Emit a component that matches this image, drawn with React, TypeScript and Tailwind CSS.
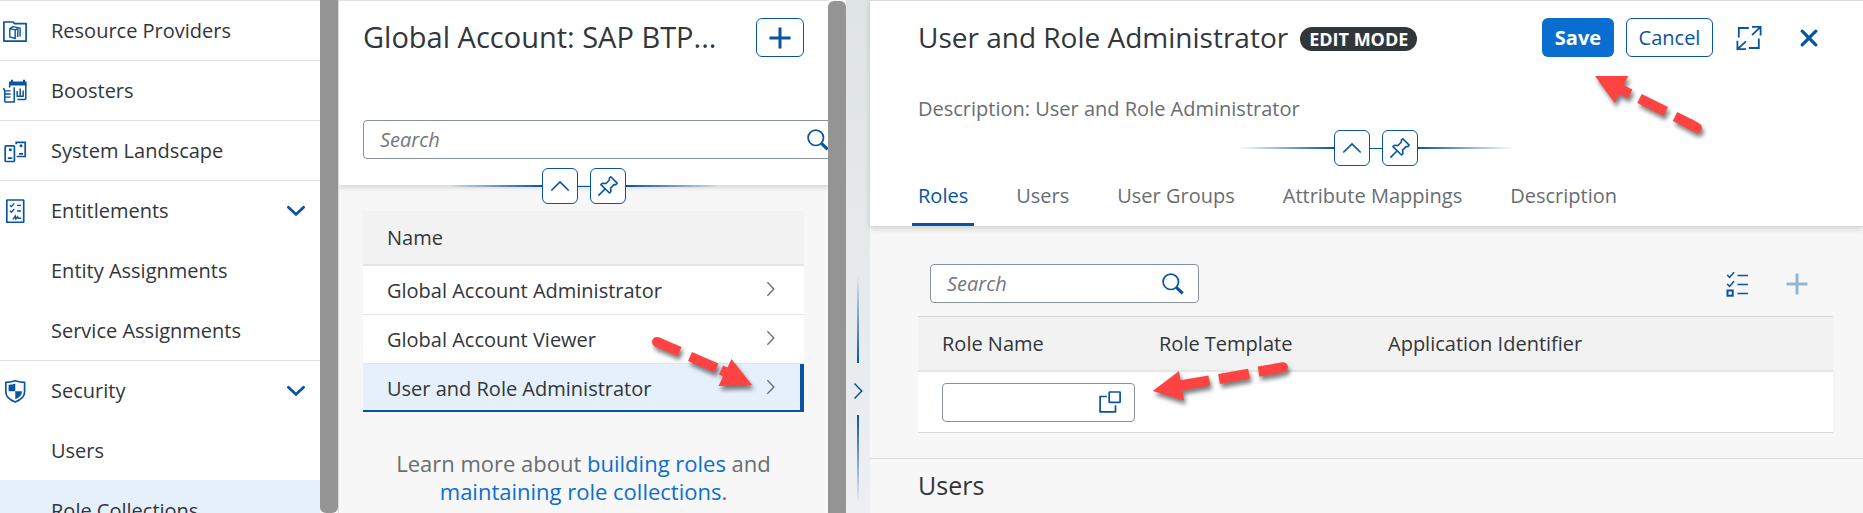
import type { ReactNode } from 'react';

type IconProps = { className?: string };

function FolderIcon() {
  return (
    <svg viewBox="0 0 24 24" className="size-6" fill="none" stroke="currentColor" strokeWidth="1.7" aria-hidden="true">
      <path d="M.9 22.1V3h9.3l1.2 1.6h11.7v17.5z" strokeLinejoin="round" />
      <path d="M6.8 9.6l5.4 1.3v8.6l-5.4-1.6zM6.8 9.6l3.4-2 6.9 1.5v8.4M12.2 10.9l2.6-1.2v8.2" strokeWidth="1.4" strokeLinejoin="round" />
    </svg>
  );
}

function BoosterIcon() {
  return (
    <svg viewBox="0 0 24 24" className="size-6" fill="none" stroke="currentColor" strokeWidth="1.5" aria-hidden="true">
      <path d="M6 6.4V2.6h2V.8h2v1.8h10V.8h2v1.8h1.6v3.8z" fill="currentColor" stroke="none" />
      <path d="M6.6 6v2.6M22.8 5v14.6q0 .9-.9.9H14.4" />
      <path d="M14.2 12v5.2h6.6M17.2 9.5v7.4M20.2 11.5v5.6" />
      <path d="M1.8 23.1V12.2L.6 8.9M1.8 23.1h9.4V8.2" />
      <path d="M2 11.8h5.6M2 15h5.6M2 18.2h5.6" strokeWidth="1.3" />
    </svg>
  );
}

function LandscapeIcon() {
  return (
    <svg viewBox="0 0 24 24" className="size-6" fill="none" stroke="currentColor" strokeWidth="1.7" aria-hidden="true">
      <rect x="2.2" y="6.9" width="9.2" height="15.6" rx="0.8" />
      <path d="M13.2 5.2V3.3h9v14.2h-8.6M4.8 19.2h4.4M16 14.8h4" />
      <circle cx="7.3" cy="10.8" r="1.5" fill="currentColor" stroke="none" />
      <circle cx="18" cy="6.8" r="1.5" fill="currentColor" stroke="none" />
    </svg>
  );
}

function EntitlementIcon() {
  return (
    <svg viewBox="0 0 24 24" className="size-6" fill="none" stroke="currentColor" strokeWidth="1.4" aria-hidden="true">
      <rect x="3.8" y="1" width="16.9" height="22.4" rx="0.6" strokeWidth="1.7" />
      <path d="M7 6.2l1.4 1.4 2.8-3.2M7 11.8l1.4 1.4 2.8-3.2M14 6.4h4M14 12h4" />
      <path d="M10 20.3l2.2-3.2.6 2.9 1.8-2.3.6 1.6h2.8" />
    </svg>
  );
}

function ShieldIcon() {
  return (
    <svg viewBox="0 0 24 24" className="size-6" fill="none" stroke="currentColor" strokeWidth="1.7" aria-hidden="true">
      <path d="M12.2 1.7q4.8 1.6 9.4 1.6v9.5q0 6.7-9.4 10.2-9.4-3.5-9.4-10.2V3.3q4.6 0 9.4-1.6z" strokeLinejoin="round" />
      <path d="M5.6 5.7q3.5-.2 6.7-1.3v7.9H5.6zM12.3 12.3H19q0 5-6.700 8z" fill="currentColor" stroke="none" />
    </svg>
  );
}

function ChevronDown() {
  return (
    <svg viewBox="0 0 20 12" className="h-3 w-5" fill="none" stroke="currentColor" strokeWidth="2.8" strokeLinecap="round" aria-hidden="true">
      <path d="M2.4 2.2L10 9.4l7.6-7.2" />
    </svg>
  );
}

function ChevronRight({ className = '' }: IconProps) {
  return (
    <svg viewBox="0 0 10 18" className={className} fill="none" stroke="currentColor" strokeWidth="1.5" aria-hidden="true">
      <path d="M1.5 1.5L8.8 9l-7.3 7.5" />
    </svg>
  );
}

function SearchIcon() {
  return (
    <svg viewBox="0 0 22 22" className="size-[22px]" fill="none" stroke="currentColor" aria-hidden="true">
      <circle cx="8.8" cy="8.8" r="7.7" strokeWidth="1.7" />
      <path d="M14.3 14.3l6.4 6" strokeWidth="3.2" />
    </svg>
  );
}

function PlusIcon() {
  return (
    <svg viewBox="0 0 22 22" className="size-[22px]" fill="none" stroke="currentColor" strokeWidth="3" aria-hidden="true">
      <path d="M11 .5v21M.5 11h21" />
    </svg>
  );
}

function CollapseUpIcon() {
  return (
    <svg viewBox="0 0 20 12" className="h-3 w-5" fill="none" stroke="currentColor" strokeWidth="1.7" aria-hidden="true">
      <path d="M1.3 10.5L10 2l8.7 8.5" />
    </svg>
  );
}

function PinIcon() {
  return (
    <svg viewBox="0 0 22 22" className="size-[22px]" fill="none" stroke="currentColor" strokeWidth="1.6" strokeLinejoin="round" aria-hidden="true">
      <path d="M13.8 1.8l6.4 6.3-1.2 1.5h-2l-3.4 3.5.3 3.6-1.4 1.3-8.6-8.4 1.4-1.3 3.7.2 3.4-3.5V3z" />
      <path d="M8 14L1.4 20.6" />
    </svg>
  );
}

function ExpandIcon() {
  return (
    <svg viewBox="0 0 26 26" className="size-[26px]" fill="none" stroke="currentColor" strokeWidth="1.8" aria-hidden="true">
      <path d="M2.8 12.5V3h10M22.8 13.5V23h-10" />
      <path d="M16 1.8h8.6v8.7M24.3 2.1l-8.3 8M10 24.2H1.4v-8.4M1.7 23.9l8.3-7.6" />
    </svg>
  );
}

function CloseIcon() {
  return (
    <svg viewBox="0 0 18 18" className="size-[18px]" fill="none" stroke="currentColor" strokeWidth="3.2" strokeLinecap="round" aria-hidden="true">
      <path d="M2.2 2.2l13.6 13.6M15.8 2.2L2.2 15.8" />
    </svg>
  );
}

function ValueHelpIcon() {
  return (
    <svg viewBox="0 0 22 22" className="size-[22px]" fill="none" stroke="currentColor" strokeWidth="1.7" aria-hidden="true">
      <path d="M7.8 5.5H1.1v15.4h15.4v-6.6" strokeLinejoin="round" />
      <rect x="10.2" y="1" width="10.9" height="10.4" rx="0.5" />
    </svg>
  );
}

function MultiSelectIcon() {
  return (
    <svg viewBox="0 0 22 26" className="h-[26px] w-[22px]" fill="none" stroke="currentColor" strokeWidth="1.6" aria-hidden="true">
      <path d="M1.2 4l2.4 2.4L8 1.2M1.2 13l2.4 2.4L8 10.2M11.5 4.5H22M11.5 13.5H22M11.5 22.5H22" />
      <rect x="1.5" y="19.5" width="5.2" height="5.2" strokeWidth="2" />
    </svg>
  );
}

function NavItem({ icon, label, child, expandable, selected }: { icon?: ReactNode; label: string; child?: boolean; expandable?: boolean; selected?: boolean }) {
  return (
    <li className={child ? '' : 'border-t border-[#e0e0e0]'}>
      <a
        href="#"
        aria-current={selected ? 'page' : undefined}
        className={`flex items-center pr-3.5 pl-[3px] ${child ? 'h-[60px] pt-0.5' : 'h-[59px]'} ${selected ? 'bg-[#e5f0fa]' : ''}`}
      >
        <span className="w-12 shrink-0 text-[#0854a0]">{icon}</span>
        <span className="flex-1">{label}</span>
        {expandable && <span className="text-[#0854a0]"><ChevronDown /></span>}
      </a>
    </li>
  );
}

function HeaderToggles() {
  const box = 'flex size-9 items-center justify-center rounded-md border border-[#0854a0] bg-white text-[#0854a0]';
  return (
    <div className="flex items-center justify-center">
      <span className="h-0.5 w-24 bg-linear-to-r from-transparent to-[#0854a0]" />
      <button type="button" aria-label="Collapse header" className={box}><CollapseUpIcon /></button>
      <span className="h-px w-3 bg-[#0854a0]" />
      <button type="button" aria-label="Pin header" className={box}><PinIcon /></button>
      <span className="h-0.5 w-24 bg-linear-to-r from-[#0854a0] to-transparent" />
    </div>
  );
}

function SearchBox({ label, className }: { label: string; className: string }) {
  return (
    <div className={`flex h-[39px] shrink-0 items-center rounded-sm border border-[#89919a] bg-white pr-3.5 pl-4 ${className}`}>
      <input
        type="search"
        aria-label={label}
        placeholder="Search"
        className="min-w-0 flex-1 bg-transparent outline-none placeholder:text-[#74777a] placeholder:italic"
      />
      <button type="button" aria-label="Run search" className="text-[#0854a0]"><SearchIcon /></button>
    </div>
  );
}

function Arrow({ className, viewBox, head, dashes, cap }: { className: string; viewBox: string; head: string; dashes: string; cap: string }) {
  return (
    <svg viewBox={viewBox} className={`pointer-events-none absolute drop-shadow-[2px_4px_2px_rgba(0,0,0,0.5)] ${className}`} fill="none" stroke="#ff4343" strokeWidth="10" aria-hidden="true">
      <path d={head} fill="#ff4343" stroke="none" />
      <path d={dashes} />
      <path d={cap} strokeLinecap="round" />
    </svg>
  );
}

const collections = ['Global Account Administrator', 'Global Account Viewer', 'User and Role Administrator'];
const tabs = ['Roles', 'Users', 'User Groups', 'Attribute Mappings', 'Description'];

export default function App() {
  return (
    <div className="flex h-screen overflow-hidden bg-[#f7f7f7] font-['Open_Sans',sans-serif] text-xl text-[#32363a]">
      <nav aria-label="Main" className="w-80 shrink-0 overflow-hidden bg-white">
        <ul>
          <NavItem icon={<FolderIcon />} label="Resource Providers" />
          <NavItem icon={<BoosterIcon />} label="Boosters" />
          <NavItem icon={<LandscapeIcon />} label="System Landscape" />
          <NavItem icon={<EntitlementIcon />} label="Entitlements" expandable />
          <NavItem label="Entity Assignments" child />
          <NavItem label="Service Assignments" child />
          <NavItem icon={<ShieldIcon />} label="Security" expandable />
          <NavItem label="Users" child />
          <NavItem label="Role Collections" child selected />
        </ul>
      </nav>
      <div className="w-[18px] shrink-0 rounded-b-md bg-[#949494]" />

      <section className="flex w-[490px] shrink-0 flex-col overflow-hidden border-l border-[#d9d9d9]">
        <header className="h-[186px] shrink-0 border-t border-b border-[#e0e0e0] bg-white pl-6 shadow-[0_2px_4px_rgba(0,0,0,0.12)]">
          <div className="flex items-start justify-between pt-[17px] pr-6">
            <h1 className="text-[29px] leading-[38px]">Global Account: SAP BTP...</h1>
            <button type="button" aria-label="Create role collection" className="flex h-[39px] w-12 items-center justify-center rounded-md border border-[#0854a0] text-[#0854a0]">
              <PlusIcon />
            </button>
          </div>
          <SearchBox label="Search role collections" className="mt-[63px] w-[481px]" />
        </header>
        <div className="-mt-[18px]">
          <HeaderToggles />
        </div>

        <div className="px-6 pt-[7px]">
          <table className="w-full border-separate border-spacing-0 text-left">
            <thead>
              <tr className="h-[55px] bg-[#f2f2f2]">
                <th className="border-b-2 border-[#e5e5e5] pl-6 font-normal" colSpan={2}>Name</th>
              </tr>
            </thead>
            <tbody>
              {collections.map((name, i) => {
                const selected = i === 2;
                return (
                  <tr key={name} className={selected ? 'h-12 bg-[#e5f0fa]' : 'h-[49px] bg-white'}>
                    <td className={selected ? 'border-b-2 border-[#0854a0] pt-[3px] pl-6' : 'border-b border-[#e5e5e5] pt-0.5 pl-6'}>{name}</td>
                    <td
                      className={
                        selected
                          ? 'w-[38px] border-r-4 border-b-2 border-r-[#0854a0] border-b-[#0854a0] text-[#6a6d70]'
                          : 'w-[38px] border-b border-[#e5e5e5] pb-0.5 text-[#6a6d70]'
                      }
                    >
                      <ChevronRight className="h-4 w-[9px]" />
                    </td>
                  </tr>
                );
              })}
            </tbody>
          </table>
          <p className="mt-[37px] text-center text-[22px] leading-7 text-[#6a6d70]">
            Learn more about <a href="#" className="text-[#0a6ed1]">building roles</a> and<br />
            <a href="#" className="text-[#0a6ed1]">maintaining role collections</a>.
          </p>
        </div>
      </section>
      <div className="mt-px w-[18px] shrink-0 rounded-t-md bg-[#949494]" />

      <div className="flex w-6 shrink-0 flex-col items-center bg-linear-to-b from-[#dfe4e4] to-[#edeff2] pt-[275px]">
        <span className="h-[88px] w-0.5 shrink-0 bg-linear-to-b from-transparent to-[#0854a0]" />
        <button type="button" aria-label="Resize columns" className="flex h-[52px] shrink-0 items-center pt-1 text-[#0854a0]">
          <ChevronRight className="h-[18px] w-2.5" />
        </button>
        <span className="h-[88px] w-0.5 shrink-0 bg-linear-to-b from-[#0854a0] to-transparent" />
      </div>

      <main className="min-w-0 flex-1">
        <header className="h-[227px] border-t border-b border-[#d9d9d9] bg-white shadow-[0_2px_6px_rgba(0,0,0,0.15)]">
          <div className="flex items-start pt-[17px] pr-[45px] pl-12">
            <h2 className="text-[28px] leading-[38px] whitespace-nowrap">User and Role Administrator</h2>
            <span className="mt-[9px] ml-3 rounded-full bg-[#32363a] px-[9px] text-lg leading-6 font-bold whitespace-nowrap text-white">EDIT MODE</span>
            <div className="ml-auto flex items-center">
              <button type="button" className="h-[39px] w-[72px] rounded-md bg-[#0a6ed1] font-bold text-white">Save</button>
              <button type="button" className="ml-3 h-[39px] w-[87px] rounded-md border border-[#0854a0] text-[#0854a0]">Cancel</button>
              <button type="button" aria-label="Full screen" className="ml-[23px] text-[#0854a0]"><ExpandIcon /></button>
              <button type="button" aria-label="Close" className="ml-[38px] text-[#0854a0]"><CloseIcon /></button>
            </div>
          </div>
          <p className="mt-9 pl-12 leading-8 text-[#6a6d70]">Description: User and Role Administrator</p>
          <div className="mt-[5px] ml-[18px]">
            <HeaderToggles />
          </div>
          <div role="tablist" className="flex gap-9 pl-[42px] whitespace-nowrap text-[#6a6d70]">
            {tabs.map((tab, i) => (
              <button
                key={tab}
                type="button"
                role="tab"
                aria-selected={i === 0}
                className={i === 0 ? 'h-[60px] rounded-t-sm border-b-[3px] border-[#0854a0] px-1.5 pt-0.5 text-[#0854a0]' : 'h-[60px] border-b-[3px] border-transparent px-1.5 pt-0.5'}
              >
                {tab}
              </button>
            ))}
          </div>
        </header>

        <div className="pr-[30px] pl-12">
          <div className="flex items-center pt-[37px] pr-[25px] pl-3 text-[#0854a0]">
            <SearchBox label="Search roles" className="w-[269px]" />
            <button type="button" aria-label="Select multiple" className="ml-auto"><MultiSelectIcon /></button>
            <button type="button" aria-label="Add role" disabled className="ml-[38px] opacity-40"><PlusIcon /></button>
          </div>
          <table className="mt-[13px] w-full table-fixed border-separate border-spacing-0 border-y border-[#d9d9d9] text-left">
            <thead>
              <tr className="h-[55px] bg-[#f2f2f2]">
                <th className="w-[217px] border-b-2 border-[#e5e5e5] pl-6 font-normal">Role Name</th>
                <th className="w-[229px] border-b-2 border-[#e5e5e5] pl-6 font-normal">Role Template</th>
                <th className="border-b-2 border-[#e5e5e5] pl-6 font-normal">Application Identifier</th>
              </tr>
            </thead>
            <tbody>
              <tr className="h-[60px] bg-white">
                <td className="pl-6">
                  <div className="flex h-[39px] w-[193px] items-center rounded-sm border border-[#89919a] pr-[13px] pl-3">
                    <input type="text" aria-label="Role Name" className="min-w-0 flex-1 bg-transparent outline-none" />
                    <button type="button" aria-label="Open role list" className="text-[#0854a0]"><ValueHelpIcon /></button>
                  </div>
                </td>
                <td />
                <td />
              </tr>
            </tbody>
          </table>
        </div>
        <section className="mt-[25px] border-t border-[#d9d9d9] pt-2 pl-12">
          <h3 className="text-[25px] leading-9">Users</h3>
        </section>
      </main>

      <Arrow
        className="top-[330px] left-[645px] h-[65px] w-[115px]"
        viewBox="645 330 115 65"
        head="M731.5 359L752 385L718.5 386z"
        dashes="M656 341.5L679.5 351.7M690 356.5L716.5 368M721 370L730 374"
        cap="M657 342L664 345"
      />
      <Arrow
        className="top-[65px] left-[1585px] h-[75px] w-[125px]"
        viewBox="1585 65 125 75"
        head="M1595 76L1628.3 76L1614.7 103z"
        dashes="M1618 88L1630.2 94M1639.5 98.5L1665.7 111.5M1675 116.5L1692 125"
        cap="M1690 124L1697 127.8"
      />
      <Arrow
        className="top-[355px] left-[1142px] h-[55px] w-[155px]"
        viewBox="1142 355 155 55"
        head="M1152.7 391L1179 371L1184 400.5z"
        dashes="M1180 385.5L1209.3 380.5M1219 379L1249 373.7M1258.5 371.5L1277 368.5"
        cap="M1275 368.7L1283 367.2"
      />
    </div>
  );
}
